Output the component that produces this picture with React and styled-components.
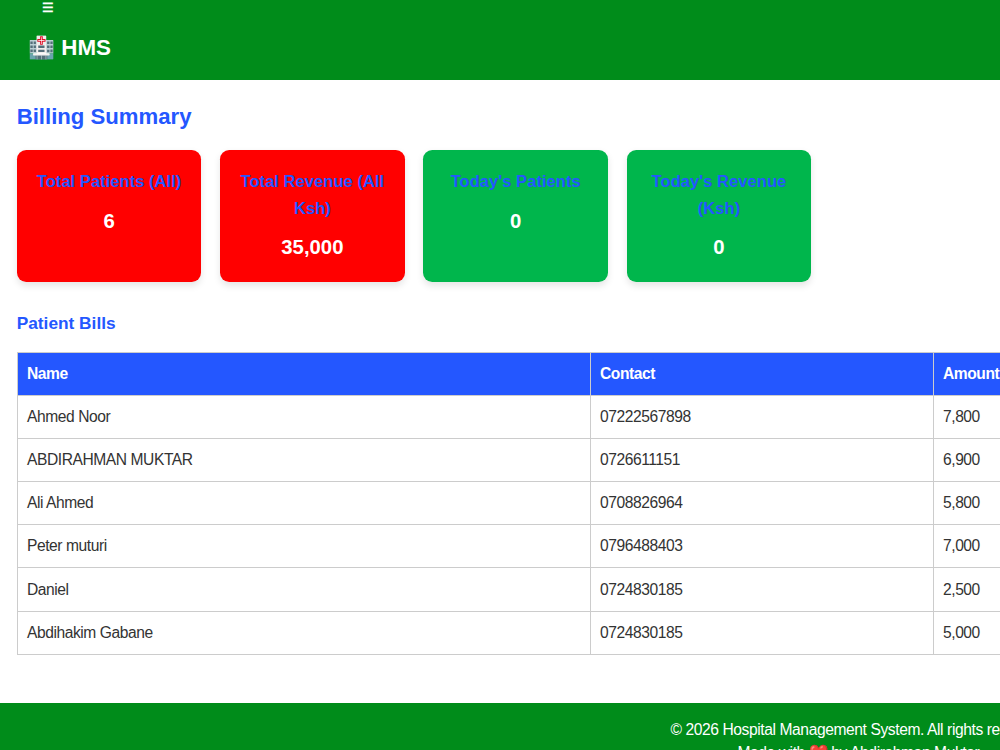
import React from "react";
import styled, { createGlobalStyle } from "styled-components";

const GlobalStyle = createGlobalStyle`
  *, *::before, *::after { box-sizing: border-box; }
  html, body { margin: 0; height: 750px; overflow: hidden; }
  body {
    background: #fff;
    color: #333;
    font-family: "Liberation Sans", Arial, sans-serif;
    font-size: 14.8px;
    line-height: 1.6;
  }
`;

const Page = styled.div`
  width: 1000px;
  height: 750px;
  overflow: hidden;
  display: flex;
  flex-direction: column;
`;

const Header = styled.header`
  flex: none;
  height: 80.4px;
  background: #008c1a;
  color: #fff;
`;

const MenuButton = styled.div`
  height: 15px;
  padding-left: 42.2px;
  display: flex;
  align-items: center;
  font-size: 12.8px;
  font-weight: bold;
  line-height: 15px;
`;

const Logo = styled.div`
  padding: 15px 0 0 28px;
  font-size: 22.4px;
  font-weight: bold;
  line-height: 35.5px;
`;

const LogoMark = styled.span`
  font-size: 21.7px;
`;

const Main = styled.main`
  flex: none;
  height: 622.4px;
  padding: 18.3px 0 0 16.7px;
`;

const Title = styled.h2`
  margin: 0;
  color: #2457ff;
  font-size: 22.17px;
  line-height: 35.5px;
`;

const Cards = styled.div`
  display: flex;
  gap: 18.5px;
  margin-top: 15.8px;
`;

const Card = styled.section`
  width: 184.8px;
  height: 132px;
  padding: 19.1px 18.5px 18px;
  border-radius: 9.2px;
  background: ${(p) => (p.$tone === "red" ? "#ff0000" : "#00b64c")};
  box-shadow: 0 3.7px 7.4px rgba(0, 0, 0, 0.1);
  text-align: center;
`;

const CardTitle = styled.h3`
  margin: 0 0 8.9px;
  color: #2457ff;
  font-size: 16.63px;
  line-height: 26.6px;
`;

const CardValue = styled.p`
  margin: 0;
  color: #fff;
  font-size: 20.33px;
  font-weight: bold;
  line-height: 32.5px;
`;

const Subtitle = styled.h3`
  margin: 27.8px 0 14.6px;
  color: #2457ff;
  font-size: 17.3px;
  line-height: 27.7px;
`;

const Table = styled.table`
  width: 1160px;
  table-layout: fixed;
  border-collapse: collapse;
`;

const cell = `
  padding: 0 9.3px;
  border: 1px solid #ccc;
  font-size: 15.6px;
  line-height: 24px;
  letter-spacing: -0.43px;
  text-align: left;
  white-space: nowrap;
`;

const HeadCell = styled.th`
  ${cell}
  width: ${(p) => p.$width};
  height: 43px;
  background: #2457ff;
  color: #fff;
`;

const Cell = styled.td`
  ${cell}
  height: 43.1px;
`;

const Footer = styled.footer`
  flex: 1;
  padding: 14.8px 0 0 670.4px;
  overflow: hidden;
  background: #008c1a;
  color: #fff;
  white-space: nowrap;
`;

const FooterText = styled.div`
  width: 376px;
  font-size: 15.6px;
  letter-spacing: -0.4px;
  text-align: center;
  line-height: 23.4px;
`;

const stats = [
  { title: "Total Patients (All)", value: "6", tone: "red" },
  { title: "Total Revenue (All Ksh)", value: "35,000", tone: "red" },
  { title: "Today's Patients", value: "0", tone: "green" },
  { title: "Today's Revenue (Ksh)", value: "0", tone: "green" },
];

const bills = [
  ["Ahmed Noor", "07222567898", "7,800"],
  ["ABDIRAHMAN MUKTAR", "0726611151", "6,900"],
  ["Ali Ahmed", "0708826964", "5,800"],
  ["Peter muturi", "0796488403", "7,000"],
  ["Daniel", "0724830185", "2,500"],
  ["Abdihakim Gabane", "0724830185", "5,000"],
];

export default function App() {
  return (
    <Page>
      <GlobalStyle />
      <Header>
        <MenuButton>☰</MenuButton>
        <Logo><LogoMark>🏥</LogoMark> HMS</Logo>
      </Header>
      <Main>
        <Title>Billing Summary</Title>
        <Cards>
          {stats.map((s) => (
            <Card key={s.title} $tone={s.tone}>
              <CardTitle>{s.title}</CardTitle>
              <CardValue>{s.value}</CardValue>
            </Card>
          ))}
        </Cards>
        <Subtitle>Patient Bills</Subtitle>
        <Table>
          <thead>
            <tr>
              <HeadCell $width="573px">Name</HeadCell>
              <HeadCell $width="343px">Contact</HeadCell>
              <HeadCell $width="244px">Amount</HeadCell>
            </tr>
          </thead>
          <tbody>
            {bills.map(([name, contact, amount]) => (
              <tr key={name}>
                <Cell>{name}</Cell>
                <Cell>{contact}</Cell>
                <Cell>{amount}</Cell>
              </tr>
            ))}
          </tbody>
        </Table>
      </Main>
      <Footer>
        <FooterText>© 2026 Hospital Management System. All rights reserved.</FooterText>
        <FooterText>Made with ❤️ by Abdirahman Muktar</FooterText>
      </Footer>
    </Page>
  );
}
